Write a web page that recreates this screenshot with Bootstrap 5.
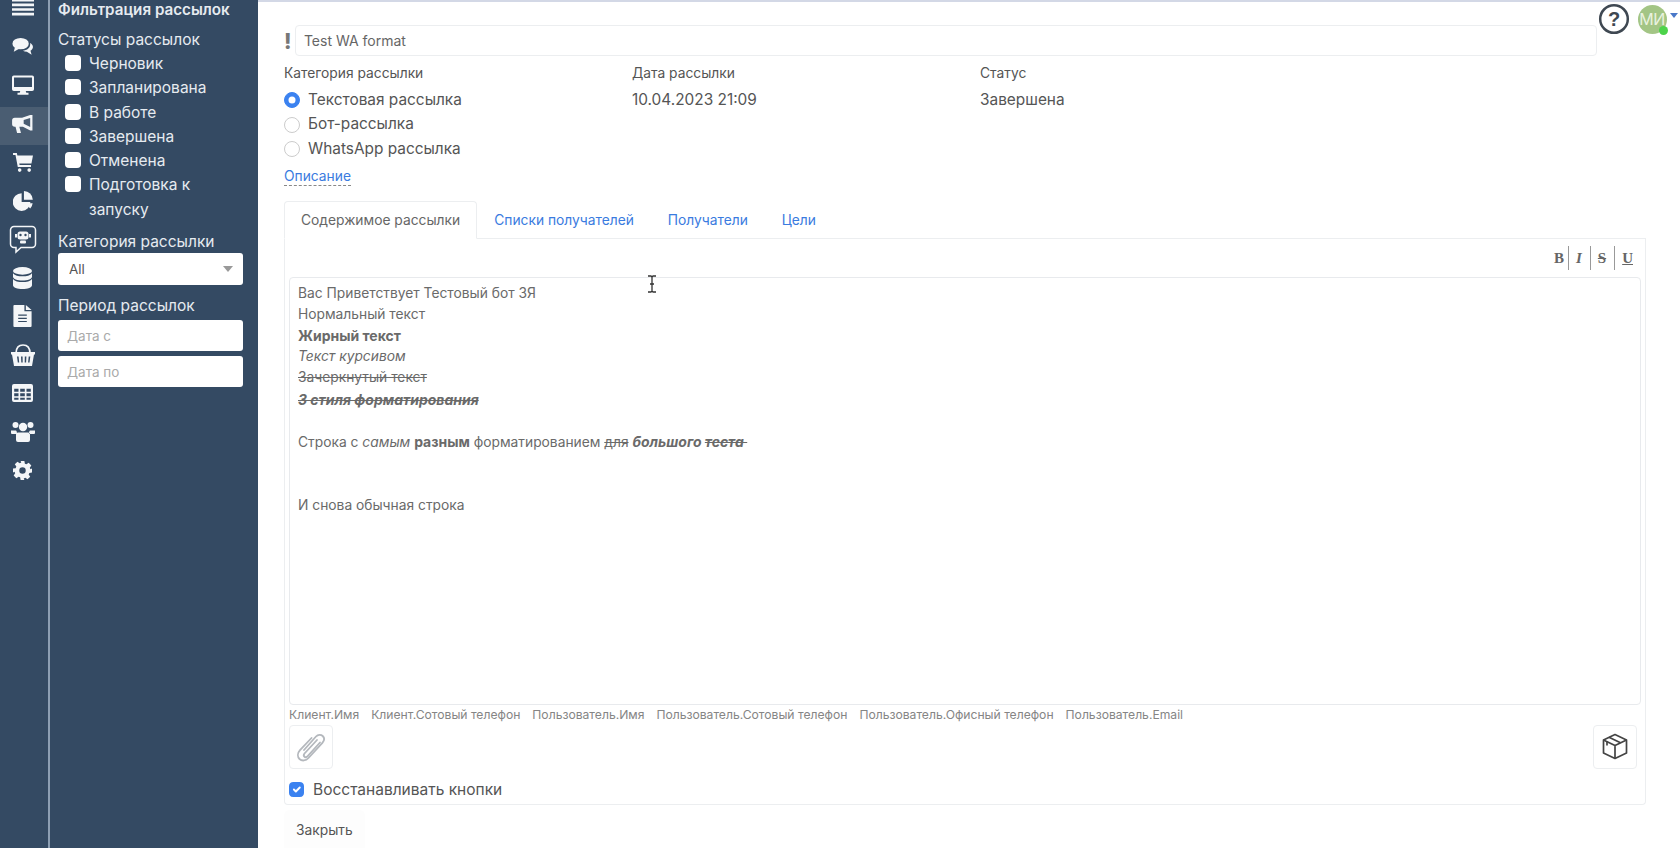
<!DOCTYPE html>
<html lang="ru">
<head>
<meta charset="utf-8">
<title>Рассылка</title>
<link href="https://cdn.jsdelivr.net/npm/bootstrap@5.3.0/dist/css/bootstrap.min.css" rel="stylesheet">
<style>
html,body{height:848px;overflow:hidden}
body{font-family:Inter,"Liberation Sans",Arial,sans-serif;font-size:15px;color:#5a5a5a;background:#fff}
.app-root{height:848px;overflow:hidden}
.rail{width:48px;background:#344a63;flex:none;overflow:hidden}
.rail-inner{margin-top:-11px}
.rail-item{height:38.5px;display:flex;align-items:center;justify-content:center;padding-right:3px}
.rail-item.on{background:#4a5d72;position:relative;top:2px}
.rail-item.on svg{position:relative;top:-1px}
.rail-item svg{fill:#f4f6f8;display:block}
.rail-sep{width:2px;background:#8d9fb3;flex:none}
.filters{width:208px;flex:none;background:#344a63;color:#e6ebf0;padding:0 15px 0 8px;font-size:15.5px}
.f-title{font-weight:600;font-size:15.2px;height:19px;line-height:19px;margin-bottom:11px}
.f-head{line-height:20px;margin-bottom:2px}
.f-row{display:flex;align-items:flex-start;line-height:24.3px;margin:0;padding-left:7px;gap:8px}
.f-row .form-check-input{width:16px;height:16px;margin:3px 0 0;flex:none;border:0;border-radius:4px}
.f-head.cat-head{margin-top:10px;margin-bottom:1px}
.f-select{height:32px;border:0;border-radius:3px;font-size:13.5px;color:#555;padding:0 8px 0 11px;margin:1px 0 11px;line-height:32px;background-size:10px 6px;background-position:right 10px center;background-image:url("data:image/svg+xml,%3csvg xmlns='http://www.w3.org/2000/svg' viewBox='0 0 10 6'%3e%3cpath fill='%23999' d='M0 0h10L5 6z'/%3e%3c/svg%3e")}
.f-period{margin-bottom:4px}
.f-input{height:31px;min-height:31px;border:0;border-radius:3px;font-size:13.5px;padding:0 9px;margin-bottom:5px}
.f-input::placeholder{color:#aaa}
.main-pane{flex:1;min-width:0;border-top:2px solid #d3d8e6;padding:23px 34px 0 26px;position:relative}
.title-row{display:flex;align-items:center;height:31px;margin-right:49px;margin-bottom:2px}
.bang{width:11px;font-weight:800;font-size:21px;color:#777;line-height:1;padding-top:1px}
.title-input{height:31px;font-size:14px;color:#666;border:1px solid #eceef0;border-radius:4px;padding:0 8px}
.meta{display:grid;grid-template-columns:348px 348px 348px;margin-top:7px}
.meta-label{font-size:13.8px;line-height:20px;color:#555;margin-bottom:5px}
.meta-val{font-size:15.4px;line-height:24.4px;color:#555}
.radio-line{display:flex;align-items:center;gap:8px;font-size:15.4px;line-height:24.4px;color:#555;margin:0}
.radio-line .form-check-input{width:16px;height:16px;margin:0;flex:none;border-color:#ccc}
.form-check-input:checked{background-color:#3b82f0;border-color:#3b82f0}
.desc-link{display:inline-block;font-size:13.8px;line-height:17px;color:#3a7be0;text-decoration:none;border-bottom:1px dashed #888;margin-top:7px}
.tabs-line{margin-top:13px;border-bottom:1px solid #eceef0;font-size:13.8px}
.tabs-line .nav-link{padding:0 16px;line-height:37px;height:38px;color:#3a7be0;border:1px solid transparent;border-radius:4px 4px 0 0}
.tabs-line .nav-link.active{color:#666;border-color:#eceef0 #eceef0 #fff;background:#fff}
.tab-box{border:1px solid #eceef0;border-top:0;border-radius:0 0 4px 4px;height:566px;padding:0 4px;display:flex;flex-direction:column}
.fmt-bar{height:38px;display:flex;justify-content:flex-end;align-items:center;padding-right:0;padding-top:1px;font-family:"Liberation Serif",serif;font-size:15px;color:#666;font-weight:700}
.fmt-bar span{padding:0 8px 0 7px;line-height:24px;border-left:1px solid #999}
.fmt-bar span:first-child{border-left:0;padding-right:4px}
.editor{height:428px;border:1px solid #e8eaed;border-radius:4px;padding:5px 8px;font-size:13.8px;line-height:21.2px;color:#6a6a6a;flex:none}
.editor b{font-size:14px}
.editor .line{height:21.2px;white-space:nowrap}
.tokens{display:flex;gap:12px;font-size:12.15px;color:#858585;line-height:18px;margin-top:1px}
.tool-row{display:flex;justify-content:space-between;padding-right:4px;margin-top:1px}
.tool-btn{width:44px;height:44px;padding:0;border:1px solid #eceef0;border-radius:4px;background:#fff;display:flex;align-items:center;justify-content:center}
.keep-row{display:flex;align-items:center;gap:9px;font-size:15.5px;color:#555;margin:9px 0 0;line-height:24px}
.keep-row .form-check-input{width:15px;height:15px;margin:0;flex:none}
.close-btn{font-size:13.8px;color:#555;border:0;background:#fdfdfd;padding:0 12px;height:42px;margin-top:5px}
.top-tools{position:absolute;top:0;right:0;width:80px;height:34px}
.help-ico{position:absolute;left:-2px;top:1px}
.avatar{position:absolute;left:37.5px;top:2.5px;width:29px;height:29px;border-radius:50%;background:#a3c585;color:#e9f2df;font-size:16px;line-height:29px;text-align:center;overflow:hidden;letter-spacing:-.5px}
.online{position:absolute;left:58.5px;top:23.5px;width:9px;height:9px;border-radius:50%;background:#4cd34a}
.caret-ico{position:absolute;left:70px;top:11px;width:0;height:0;border:4px solid transparent;border-top:5px solid #4a78c8;border-bottom:0}
.cursor-ico{position:absolute;left:389px;top:273px}
</style>
</head>
<body>
<div class="app-root d-flex">
  <nav class="rail">
    <div class="rail-inner">
      <div class="rail-item"><svg width="22" height="20" viewBox="0 0 22 20"><path d="M0 1h22v2.600H0zM0 5.600h22v2.600H0zM0 10.200h22v2.600H0zM0 14.800h22v2.600H0z"/></svg></div>
      <div class="rail-item"><svg width="21" height="19" viewBox="0 0 22 20"><ellipse cx="9" cy="7" rx="8.600" ry="6"/><path d="M3 11 1.800 15.500 8 12z"/><path d="M19 6.300c1.800 1 3 2.500 3 4.200 0 1.600-1 3-2.600 4l1.200 4.300-5-3.400c-1.500 0-3-.3-4.200-1 4-.2 8.600-3 7.600-8.100z"/></svg></div>
      <div class="rail-item"><svg width="22" height="20" viewBox="0 0 24 21"><path fill-rule="evenodd" d="M2 0h20a2 2 0 0 1 2 2v13a2 2 0 0 1-2 2h-7l.6 2H18v2H6v-2h2.400L9 17H2a2 2 0 0 1-2-2V2a2 2 0 0 1 2-2zm.2 2.200v10.600h19.600V2.200z"/></svg></div>
      <div class="rail-item on"><svg width="21" height="19" viewBox="0 0 23 21"><path fill-rule="evenodd" d="M20 0h2.500v17H20l-8-4H8l1.800 7H5.500L3.800 13H3a3 3 0 0 1-3-3V6a3 3 0 0 1 3-3h8zm0 3.200-7.200 2.200v4.400l7.200 3.400z"/></svg></div>
      <div class="rail-item"><svg width="20" height="19" viewBox="0 0 21 20"><path d="M0 0h4l.6 2.500H21l-1.600 8.500H6.600l.3 1.700h12v2.100H5L2.600 2.100H0z"/><circle cx="7" cy="18" r="1.900"/><circle cx="17" cy="18" r="1.900"/></svg></div>
      <div class="rail-item"><svg width="20" height="20" viewBox="0 0 22 22"><path d="M9.500 2.500V12h9.600A9.700 9.700 0 1 1 9.500 2.500z"/><path d="M12 0a10 10 0 0 1 9.800 9.600H12z"/><path d="M13 13.600h8.600a10 10 0 0 1-2.600 5.700z"/></svg></div>
      <div class="rail-item"><svg width="28" height="29" viewBox="0 0 28 29"><path fill="none" stroke="#f4f6f8" stroke-width="1.500" d="M5 1.500h18a3.500 3.500 0 0 1 3.500 3.500v14a3.500 3.500 0 0 1-3.500 3.500H12l-5 4.500v-4.500H5A3.500 3.500 0 0 1 1.500 19V5A3.500 3.500 0 0 1 5 1.500z"/><rect x="8.500" y="6.500" width="11" height="8" rx="2.500"/><rect x="6" y="9" width="2" height="3.500"/><rect x="20" y="9" width="2" height="3.500"/><rect x="11" y="15.500" width="6" height="3" rx="1"/><circle cx="11.500" cy="10" r="1.200" fill="#344a63"/><circle cx="16.500" cy="10" r="1.200" fill="#344a63"/></svg></div>
      <div class="rail-item"><svg width="19" height="22" viewBox="0 0 20 23"><ellipse cx="10" cy="4" rx="10" ry="4"/><path d="M0 6.500C2 9 5.500 9.700 10 9.700S18 9 20 6.500v3.700c0 2.300-4.500 4-10 4s-10-1.700-10-4z"/><path d="M0 12.500c2 2.500 5.500 3.200 10 3.200s8-.7 10-3.200V19c0 2.300-4.500 4-10 4S0 21.300 0 19z"/></svg></div>
      <div class="rail-item"><svg width="19" height="22" viewBox="0 0 19 23"><path fill-rule="evenodd" d="M1 0h10.500v6.500H19V22a1 1 0 0 1-1 1H1a1 1 0 0 1-1-1V1a1 1 0 0 1 1-1zM13 0l6 5.200h-6zM5 10v1.300h9V10zm0 3.300v1.300h9v-1.300zm0 3.300v1.300h9v-1.300z"/></svg></div>
      <div class="rail-item"><svg width="24" height="22" viewBox="0 0 24 22"><path fill="none" stroke="#f4f6f8" stroke-width="1.700" d="M5 9.500C5 3 8 1 12 1s7 2 7 8.500"/><path fill-rule="evenodd" d="M0 8h24v2.500h-1L21 22H3L1 10.500H0zm6 4.500.8 6h1.400l-.6-6zm4 0 .3 6h1.400l-.1-6zm3.800 0-.1 6h1.400l.3-6zm3.900 0-.6 6h1.400l.8-6z"/></svg></div>
      <div class="rail-item"><svg width="21" height="18" viewBox="0 0 21 18"><path fill-rule="evenodd" d="M2 0h17a2 2 0 0 1 2 2v14a2 2 0 0 1-2 2H2a2 2 0 0 1-2-2V2a2 2 0 0 1 2-2zm.2 4.700v3h4.300v-3zm6 0v3h4.600v-3zm6.300 0v3h4.300v-3zm-12.300 4.500v3h4.300v-3zm6 0v3h4.600v-3zm6.300 0v3h4.300v-3zM2.200 13.700v2.100h4.300v-2.100zm6 0v2.100h4.600v-2.100zm6.300 0v2.100h4.300v-2.100z"/></svg></div>
      <div class="rail-item"><svg width="24" height="21" viewBox="0 0 24 21"><circle cx="4.500" cy="4" r="3"/><circle cx="19.500" cy="4" r="3"/><circle cx="12" cy="6" r="4.200"/><path d="M0 9.500h5c1 .7 1 2 .8 3.500H1a1 1 0 0 1-1-1zM24 9.500h-5c-1 .7-1 2-.8 3.500H23a1 1 0 0 0 1-1zM7 11.500h10a2 2 0 0 1 2 2V19a2 2 0 0 1-2 2H7a2 2 0 0 1-2-2v-5.500a2 2 0 0 1 2-2z"/></svg></div>
      <div class="rail-item"><svg width="19" height="19" viewBox="0 0 20 20"><path fill-rule="evenodd" d="M8 0h4l.5 2.800 1.600.7 2.400-1.600 2.800 2.800-1.600 2.400.7 1.600L20 8v4l-2.800.5-.7 1.600 1.600 2.400-2.800 2.800-2.400-1.600-1.600.7L12 20H8l-.5-2.800-1.600-.7-2.400 1.600-2.800-2.800 1.600-2.400-.7-1.600L0 12V8l2.800-.5.7-1.600L1.900 3.500 4.700.7l2.400 1.600 1.600-.7zM10 6.600a3.400 3.400 0 1 0 0 6.800 3.400 3.400 0 0 0 0-6.800z"/></svg></div>
    </div>
  </nav>
  <div class="rail-sep"></div>
  <aside class="filters">
    <div class="f-title">Фильтрация рассылок</div>
    <div class="f-head">Статусы рассылок</div>
    <label class="f-row"><input class="form-check-input" type="checkbox"><span>Черновик</span></label>
    <label class="f-row"><input class="form-check-input" type="checkbox"><span>Запланирована</span></label>
    <label class="f-row"><input class="form-check-input" type="checkbox"><span>В работе</span></label>
    <label class="f-row"><input class="form-check-input" type="checkbox"><span>Завершена</span></label>
    <label class="f-row"><input class="form-check-input" type="checkbox"><span>Отменена</span></label>
    <label class="f-row"><input class="form-check-input" type="checkbox"><span>Подготовка к<br>запуску</span></label>
    <div class="f-head cat-head">Категория рассылки</div>
    <select class="form-select f-select"><option>All</option></select>
    <div class="f-head f-period">Период рассылок</div>
    <input class="form-control f-input" placeholder="Дата с">
    <input class="form-control f-input" placeholder="Дата по">
  </aside>
  <main class="main-pane">
    <div class="title-row"><span class="bang">!</span><input class="form-control title-input" value="Test WA format"></div>
    <div class="meta">
      <div>
        <div class="meta-label">Категория рассылки</div>
        <label class="radio-line"><input class="form-check-input" type="radio" name="kind" checked><span>Текстовая рассылка</span></label>
        <label class="radio-line"><input class="form-check-input" type="radio" name="kind"><span>Бот-рассылка</span></label>
        <label class="radio-line"><input class="form-check-input" type="radio" name="kind"><span>WhatsApp рассылка</span></label>
      </div>
      <div><div class="meta-label">Дата рассылки</div><div class="meta-val">10.04.2023 21:09</div></div>
      <div><div class="meta-label">Статус</div><div class="meta-val">Завершена</div></div>
    </div>
    <a class="desc-link" href="#">Описание</a>
    <ul class="nav nav-tabs tabs-line">
      <li class="nav-item"><a class="nav-link active" href="#">Содержимое рассылки</a></li>
      <li class="nav-item"><a class="nav-link" href="#">Списки получателей</a></li>
      <li class="nav-item"><a class="nav-link" href="#">Получатели</a></li>
      <li class="nav-item"><a class="nav-link" href="#">Цели</a></li>
    </ul>
    <div class="tab-box">
      <div class="fmt-bar"><span>B</span><span><i>I</i></span><span><s>S</s></span><span><u>U</u></span></div>
      <div class="editor">
        <div class="line">Вас Приветствует Тестовый бот ЗЯ</div>
        <div class="line">Нормальный текст</div>
        <div class="line"><b>Жирный текст</b></div>
        <div class="line"><i>Текст курсивом</i></div>
        <div class="line"><s>Зачеркнутый текст</s></div>
        <div class="line"><b><i><s>3 стиля форматирования</s></i></b></div>
        <div class="line"></div>
        <div class="line">Строка с <i>самым</i> <b>разным</b> форматированием <s>для</s> <b><i>большого <s>теста&nbsp;</s></i></b></div>
        <div class="line"></div>
        <div class="line"></div>
        <div class="line">И снова обычная строка</div>
      </div>
      <div class="tokens"><span>Клиент.Имя</span><span>Клиент.Сотовый телефон</span><span>Пользователь.Имя</span><span>Пользователь.Сотовый телефон</span><span>Пользователь.Офисный телефон</span><span>Пользователь.Email</span></div>
      <div class="tool-row">
        <button class="tool-btn" type="button" aria-label="Вложение"><svg width="30" height="32" viewBox="0 0 30 32" fill="none" stroke="#b4b8bd" stroke-width="1.800" stroke-linecap="round"><path d="M8 19 20 5.500c2-2.200 5-2.200 6.700-.5 1.800 1.800 1.700 4.600-.3 6.800L12.500 27c-2.700 3-6.700 3.200-9 1-2.300-2.300-2-6 .5-8.800L15.500 7"/><path d="M21 9 8.500 22.500c-1 1.200-.8 2.500 0 3.200s2.200.6 3.200-.5L24 11.500"/></svg></button>
        <button class="tool-btn" type="button" aria-label="Товар"><svg width="26" height="27" viewBox="0 0 26 27" fill="none" stroke="#444" stroke-width="1.700" stroke-linejoin="round"><path d="M13 1.500 24.500 7v13L13 25.500 1.500 20V7z"/><path d="M1.500 7 13 12.500 24.500 7M13 12.500v13"/><path d="M7 4.300 18.500 9.800M5 8.500v4"/></svg></button>
      </div>
      <label class="keep-row"><input class="form-check-input" type="checkbox" checked><span>Восстанавливать кнопки</span></label>
    </div>
    <button class="btn close-btn" type="button">Закрыть</button>
    <div class="top-tools">
      <svg class="help-ico" width="32" height="32" viewBox="0 0 32 32"><circle cx="16" cy="16" r="13.800" fill="none" stroke="#3f4852" stroke-width="2.500"/><text x="16" y="23" text-anchor="middle" font-family="Liberation Sans" font-weight="700" font-size="20" fill="#3f4852">?</text></svg>
      <div class="avatar">МИ</div><span class="online"></span><span class="caret-ico"></span>
    </div>
    <svg class="cursor-ico" width="10" height="18" viewBox="0 0 10 18" fill="none" stroke="#333" stroke-width="1.300"><path d="M1 1h3l1 1 1-1h3M5 2v14M1 17h3l1-1 1 1h3M3 9h4"/></svg>
  </main>
</div>
<script src="https://cdn.jsdelivr.net/npm/bootstrap@5.3.0/dist/js/bootstrap.bundle.min.js"></script>
</body>
</html>
